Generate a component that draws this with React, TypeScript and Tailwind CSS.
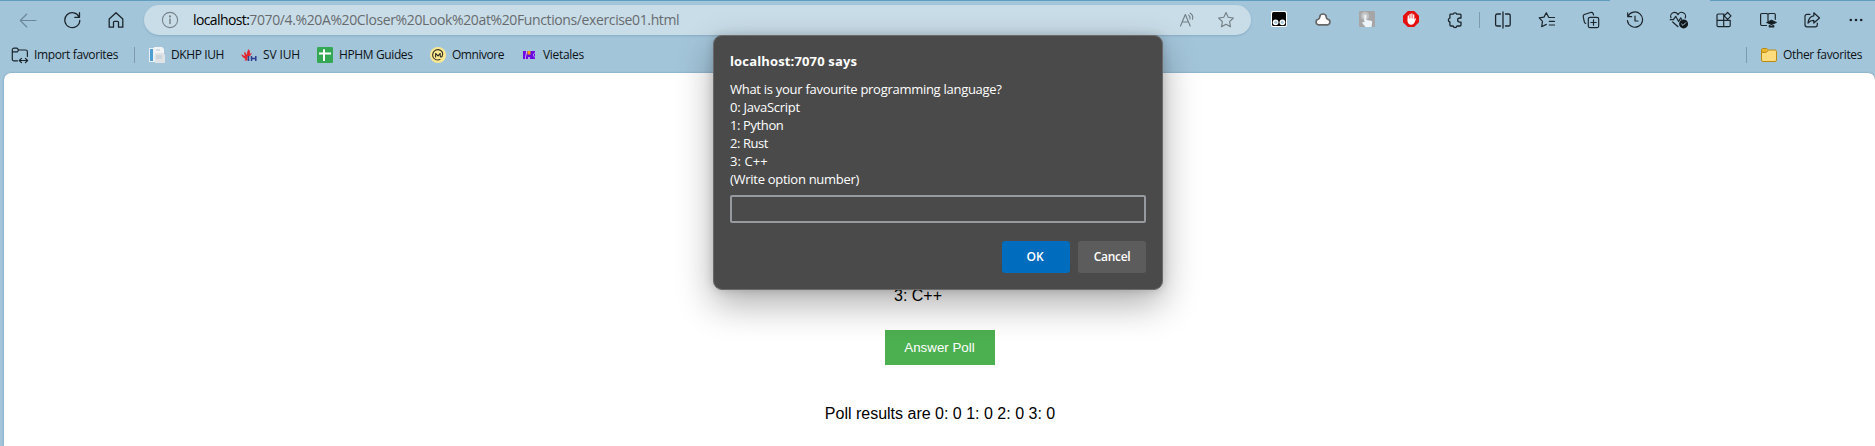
import type { ReactNode } from 'react';

function Slot({ children }: { children: ReactNode }) {
  return <div className="flex w-[44.1px] shrink-0 items-center justify-center">{children}</div>;
}

function Line({ children, color = '#1b252b', w = 1.1, size = 18 }: { children: ReactNode; color?: string; w?: number; size?: number }) {
  return (
    <svg width={size} height={size} viewBox={`0 0 ${size} ${size}`} fill="none" stroke={color} strokeWidth={w} strokeLinecap="round" strokeLinejoin="round" className="shrink-0">
      {children}
    </svg>
  );
}

const STAR = 'M9 1.6 L11.2 6.3 L16.4 7 L12.6 10.6 L13.5 15.8 L9 13.3 L4.5 15.8 L5.4 10.6 L1.6 7 L6.8 6.3 Z';

function Toolbar() {
  return (
    <div className="flex h-10 items-center pl-1.5">
      <div className="flex w-11 shrink-0 justify-center">
        <Line color="#6b8798"><path d="M17 9.5H1.5M7.8 3L1.3 9.5L7.8 16" /></Line>
      </div>
      <div className="flex w-11 shrink-0 justify-center">
        <Line w={1.3}><path d="M16.2 6.2A7.5 7.5 0 1 0 16.8 9.5M16.5 1.7V6.3H11.8" /></Line>
      </div>
      <div className="flex w-11 shrink-0 justify-center">
        <Line w={1.3}><path d="M2.2 8L9 1.8L15.8 8V16.2H11.5V11.3A1 1 0 0 0 10.5 10.3H7.5A1 1 0 0 0 6.5 11.3V16.2H2.2Z" /></Line>
      </div>
      <div className="ml-1.5 flex h-[30px] w-[1107px] shrink-0 items-center rounded-full bg-[#c9dde8] pl-[17px] shadow-[0_1px_2px_rgba(60,100,130,0.25)]">
        <Line color="#77838a"><circle cx="9" cy="9" r="7.6" /><path d="M9 8V12.6" strokeWidth="1.5" /><circle cx="9" cy="5.4" r="0.5" fill="#77838a" /></Line>
        <div className="ml-[14px] w-[986px] shrink-0 whitespace-nowrap text-[14px] leading-5 text-[#676b6e]">
          <span className="tracking-[-0.6px] text-black">localhost:</span><span className="tracking-[-0.38px]">7070/4.%20A%20Closer%20Look%20at%20Functions/exercise01.html</span>
        </div>
        <div className="flex w-[38px] shrink-0 items-center">
          <Line color="#717d84"><path d="M1.5 15L6.3 3.5L11.2 15M3.2 11H9.5M9.6 4.1C10.9 5 11.3 6.4 11 8M11.2 2.2C13.3 3.4 14.2 5.8 13.5 8.3" /></Line>
        </div>
        <Line color="#717d84"><path d={STAR} /></Line>
      </div>
      <div className="ml-1.5 flex w-[220px] shrink-0">
        <div className="flex w-11 justify-center">
          <svg width="16" height="16" viewBox="0 0 16 16">
            <rect width="16" height="16" rx="2" fill="#fff" />
            <rect x="1" y="1" width="14" height="14" rx="1.5" fill="#000" />
            <circle cx="4.6" cy="11.3" r="2.9" fill="#fff" /><circle cx="11.4" cy="11.3" r="2.9" fill="#fff" />
            <circle cx="4.8" cy="11.3" r="1.5" fill="#a3c5da" /><circle cx="11.2" cy="11.3" r="1.5" fill="#a3c5da" />
          </svg>
        </div>
        <div className="flex w-11 justify-center">
          <svg width="16" height="16" viewBox="0 0 16 16">
            <path d="M3.6 13.8A2.8 2.8 0 0 1 3.2 8.3Q4.6 7.8 4.7 6.3A3.3 3.3 0 0 1 11.3 6.3Q11.4 7.8 12.8 8.3A2.8 2.8 0 0 1 12.4 13.8Z" fill="#fff" stroke="#646667" strokeWidth="1.7" />
          </svg>
        </div>
        <div className="flex w-11 justify-center">
          <svg width="16" height="16" viewBox="0 0 16 16">
            <rect width="16" height="16" rx="1" fill="#a6a6a6" />
            <circle cx="6" cy="5" r="4.2" fill="#c0c0c0" /><circle cx="6" cy="5" r="2.3" fill="#d2d4d5" />
            <path d="M5.3 5A1 1 0 0 1 7.3 5V9L12 9.7Q13.3 10 13.1 11.5L12.5 16H6.5L3.3 12Q3 10.6 5.3 11.4Z" fill="#eef5fa" />
          </svg>
        </div>
        <div className="flex w-11 justify-center">
          <svg width="16" height="16" viewBox="0 0 16 16">
            <path d="M4.8 0H11.2L16 4.8V11.2L11.2 16H4.8L0 11.2V4.8Z" fill="#e60f0f" />
            <path d="M5.3 10.6V5M7.1 9V3.5M8.9 9V3M10.7 9V4" stroke="#fff" strokeWidth="1.3" strokeLinecap="round" />
            <path d="M4.7 7.5H11.3V9L12.4 7.2Q13.2 7 13 8L11.4 11.8Q10.4 13.7 8.2 13.7Q4.7 13.5 4.7 10Z" fill="#fff" />
          </svg>
        </div>
        <div className="flex w-11 justify-center">
          <Line w={1.3}><path d="M4.6 3.2H7.1A2 2 0 0 1 10.9 3.2H14.1A1 1 0 0 1 15 4.2V7H13.7A2 2 0 0 0 13.7 11.1H15V14A1 1 0 0 1 14 15H11A2 2 0 0 1 7.1 15H4.9A1 1 0 0 1 3.9 14V11A2 2 0 0 1 3.9 7.1V4Q3.9 3.2 4.6 3.2Z" /></Line>
        </div>
      </div>
      <div className="flex h-4 w-1 shrink-0 justify-center"><div className="w-px bg-[#7e9bad]" /></div>
      <Slot><Line w={1.3}><path d="M6.5 3H3.2A1.6 1.6 0 0 0 1.6 4.6V13.4A1.6 1.6 0 0 0 3.2 15H6.5M9 1V17M11.5 3H14.6A1.6 1.6 0 0 1 16.2 4.6V13.4A1.6 1.6 0 0 1 14.6 15H11.5" /></Line></Slot>
      <Slot><Line w={1.2}><path d="M16.5 6.5H10.8L8.3 1.7L6 6.1L1.2 6.8L4.5 10.4L3.7 15.7L8.3 13.4M11.3 10.3H16.5M11.3 14H16.5" /></Line></Slot>
      <Slot><Line w={1.2}><rect x="6.3" y="6.3" width="10.4" height="10.4" rx="1.8" /><path d="M11.5 8.8V14.2M8.8 11.5H14.2M3.7 12.5Q2.6 12 2.3 10.8L1.2 5.5Q1 4 2.3 3.5L8.5 1.5Q10.4 1 11.1 2.5L11.6 4" /></Line></Slot>
      <Slot><Line w={1.2}><path d="M1.7 1.8V5.7H5.7M2 5.5A7.6 7.6 0 1 1 1.4 9.5M9 5V10H12" /></Line></Slot>
      <Slot>
        <svg width="20" height="18" viewBox="0 0 20 18" fill="none" stroke="#1b252b" strokeWidth="1.2" strokeLinecap="round" strokeLinejoin="round">
          <path d="M2 6.8A3.8 3.8 0 0 1 9 3.7A3.8 3.8 0 0 1 16.2 7M1.3 8.7H4.4L6.7 5.3L9.6 10.5L11.7 6.9L12.6 8.3M3.7 11L9 15.7" />
          <circle cx="14.6" cy="12.9" r="4.5" fill="#11181c" stroke="none" /><path d="M12.6 13L14 14.4L16.7 11.7" stroke="#a3c5da" strokeWidth="1" />
        </svg>
      </Slot>
      <Slot><Line w={1.2}><path d="M9 3H3.2A1.2 1.2 0 0 0 2 4.2V14.5A1.2 1.2 0 0 0 3.2 15.7H14A1.2 1.2 0 0 0 15.2 14.5V9.3H2M8.7 3V15.7M12.6 1.5L16 4.9L12.6 8.3L9.2 4.9Z" /></Line></Slot>
      <Slot><Line w={1.2}><path d="M9 3.2V10M7.5 14.5H3A1.4 1.4 0 0 1 1.6 13.1V3.8A1.3 1.3 0 0 1 2.9 2.5H7.5L9 3.2L10.5 2.5H15A1.3 1.3 0 0 1 16.3 3.8V8.3" /><path d="M7.8 11.5L12.5 9.3L17.2 11.5L12.5 13.4Z" fill="#11181c" /><path d="M10.3 14.6V16H14.7V14.6L12.5 15.3Z" fill="#11181c" /></Line></Slot>
      <Slot><Line w={1.2}><path d="M7 3.3H4A2 2 0 0 0 2 5.3V13.8A2 2 0 0 0 4 15.8H12.3A2 2 0 0 0 14.3 13.8V12M10.8 1.8L16.5 7L10.8 12V9.3Q7.3 9.2 5 12Q5.7 5.4 10.8 4.8Z" /></Line></Slot>
      <Slot><svg width="16" height="4" viewBox="0 0 16 4" fill="#1b252b"><circle cx="2.8" cy="2" r="1.3" /><circle cx="8" cy="2" r="1.3" /><circle cx="13.2" cy="2" r="1.3" /></svg></Slot>
    </div>
  );
}

function Favorites() {
  return (
    <div className="flex h-[33px] items-center whitespace-nowrap pb-[3px] pl-[11px] text-[12px] leading-4 text-[#0c1215]">
      <Line w={1.2}><path d="M6.5 14.8H3A1.6 1.6 0 0 1 1.3 13.2V3.7A1.6 1.6 0 0 1 3 2.2H6L7.7 4L6.3 5.8H1.5M7.7 4H14.7A1.7 1.7 0 0 1 16.4 5.7V10.5M8.5 14.5H16.5M10.5 12.3L8.3 14.5L10.5 16.7M14.4 12.3L16.6 14.5L14.4 16.7" /></Line>
      <span className="ml-[5px] w-[100px] tracking-[-0.37px]">Import favorites</span>
      <div className="mr-[14px] h-4 w-px bg-[#7e9bad]" />
      <svg width="16" height="16" viewBox="0 0 16 16">
        <path d="M0 1H9V15H0Z" fill="#e9f0f5" /><path d="M1 2H4V14H1Z" fill="#4c9fd0" /><path d="M5 0H13L15 2V8H5Z" fill="#f1f3f5" />
        <path d="M6 6H14L16 8V16H6Z" fill="#dfe3e6" /><path d="M7 9H13M7 11H13M7 3H11" stroke="#b8c8d2" />
      </svg>
      <span className="ml-[6px] w-[70px] tracking-[-0.4px]">DKHP IUH</span>
      <svg width="16" height="16" viewBox="0 0 16 16">
        <path d="M7.5 2Q10 5 8.6 7.5L11 5.5Q10.6 8 8 9.5H6.5V13.5H3.5L4.5 12Q1.5 11 0 7.2L4 9Q2.5 6 3.7 4.4L6 8Q6 4 7.5 2Z" fill="#e2242f" />
        <path d="M7.5 9V14M10.5 9V14M10.5 11.5H14.6M14.8 9V14" stroke="#2c3c91" strokeWidth="1.5" />
      </svg>
      <span className="ml-[6px] w-[54px] tracking-[-0.13px]">SV IUH</span>
      <svg width="16" height="16" viewBox="0 0 16 16"><rect width="16" height="16" rx="1.3" fill="#34a853" /><path d="M2 6.5H14M7 2.3V14" stroke="#fff" strokeWidth="2" /></svg>
      <span className="ml-[6px] w-[91px] tracking-[-0.38px]">HPHM Guides</span>
      <svg width="16" height="16" viewBox="0 0 16 16" fill="none" stroke="#333027" strokeWidth="1.1" strokeLinejoin="round" strokeLinecap="round"><circle cx="8" cy="8" r="8" fill="#fce98f" stroke="none" /><path d="M5.6 10V6.5L8 8.8L10.2 6.5V9Q10.7 10.7 12 9.5Q13.8 5.5 10.8 3.5Q7 1.5 4 4.3Q1.5 7.5 3.6 11Q6.3 14 10 12.6" /></svg>
      <span className="ml-[6px] w-[70px] tracking-[-0.46px]">Omnivore</span>
      <svg width="14" height="16" viewBox="0 0 14 16"><path d="M1 4H13V12H1Z" fill="#6c0be0" /><path d="M4.2 4H5.2L3.6 12H2.9Z" fill="#e3c5f5" /><path d="M5.5 4H8.5V7.5H5.5Z" fill="#f7a10d" /><path d="M6 10H8V12H6Z" fill="#b9a0e8" /><path d="M12.8 5.5L11.2 8L12.8 10.5" stroke="#d7c2f5" strokeWidth=".7" fill="none" /></svg>
      <span className="ml-[7px] tracking-[-0.3px]">Vietales</span>
      <div className="ml-auto mr-[14px] h-4 w-px bg-[#7e9bad]" />
      <svg width="16" height="16" viewBox="0 0 16 16" fill="#fddc7d" stroke="#b98a12"><path d="M.5 3A1.5 1.5 0 0 1 2 1.5H5.5L7.5 3H14A1.5 1.5 0 0 1 15.5 4.5V13A1.5 1.5 0 0 1 14 14.5H2A1.5 1.5 0 0 1 .5 13Z" /><path d="M1 3Q1 2 2 2H5.4L7 3.4L5.5 5H1Z" fill="#e9b52a" stroke="none" /><path d="M.8 5.4H5.3L7.4 3.3" fill="none" /></svg>
      <span className="ml-[6px] w-[92px] tracking-[-0.35px]">Other favorites</span>
    </div>
  );
}

function Prompt() {
  return (
    <div className="absolute left-[713px] top-[35px] flex h-[255px] w-[450px] flex-col rounded-[9px] border border-[#6a6a6a] bg-[#4a4a4a] px-4 pt-[15px] text-[13px] leading-[18px] text-white shadow-[0_14px_36px_rgba(0,0,0,0.32),0_0_10px_rgba(0,0,0,0.16)]">
      <div className="h-[29px] font-bold leading-[20px] tracking-[0.15px]">localhost:7070 says</div>
      <div className="tracking-[-0.28px]">What is your favourite programming language?</div>
      <div className="tracking-[-0.25px]">0: JavaScript</div>
      <div className="tracking-[-0.39px]">1: Python</div>
      <div className="tracking-[-0.44px]">2: Rust</div>
      <div className="tracking-[0.1px]">3: C++</div>
      <div className="tracking-[-0.28px]">(Write option number)</div>
      <input className="mt-[7px] h-7 w-full shrink-0 rounded-[2px] border-2 border-[#969a9e] bg-transparent px-2 outline-none" />
      <div className="mt-[18px] flex justify-end gap-2 text-[12px] font-semibold">
        <button className="h-8 w-[68px] rounded-[3px] bg-[#006cbe] pr-[2px]">OK</button>
        <button className="h-8 w-[68px] rounded-[3px] bg-[#5c5c5c] tracking-[-0.3px]">Cancel</button>
      </div>
    </div>
  );
}

export default function App() {
  return (
    <div className="relative flex h-[446px] w-[1875px] flex-col overflow-hidden bg-[#a3c5da] font-['Open_Sans',sans-serif]">
      <div className="flex h-px shrink-0 justify-between">
        <div className="w-[1610px] bg-[#5f9dc1]" />
        <div className="w-[165px] bg-[#5f9dc1]" />
      </div>
      <div className="-mt-px shrink-0">
        <Toolbar />
        <Favorites />
      </div>
      <main className="ml-1 flex flex-1 flex-col items-center rounded-t-[7px] bg-white font-['Liberation_Sans',Arial,sans-serif] text-[16px] leading-[18px] text-black shadow-[0_0_2px_rgba(50,100,140,0.5)]">
        <div className="mt-[214px] w-[91px]">3: C++</div>
        <button className="mt-[25px] h-[35px] w-[110px] bg-[#4caf50] text-[13.333px] text-white">Answer Poll</button>
        <div className="mt-[40px] pl-px">Poll results are 0: 0 1: 0 2: 0 3: 0</div>
      </main>
      <Prompt />
    </div>
  );
}
